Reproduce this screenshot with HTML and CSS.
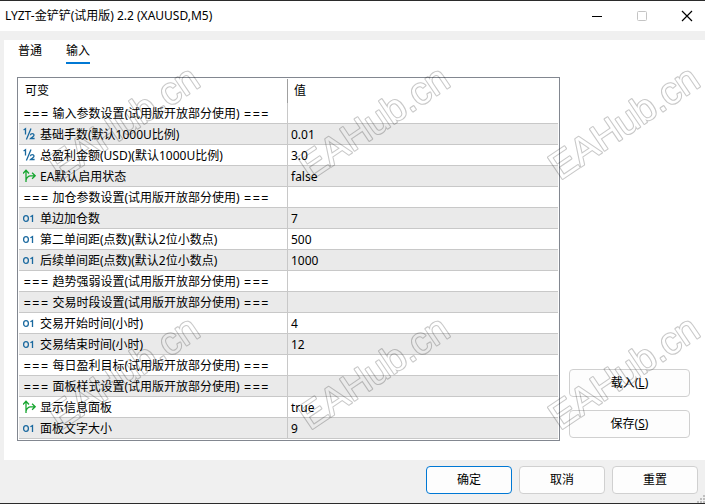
FILE: index.html
```
<!DOCTYPE html>
<html lang="zh-CN">
<head>
    <meta charset="UTF-8">
    <meta name="viewport" content="width=device-width, initial-scale=1.0">
    <title>LYZT-金铲铲(试用版) 2.2 (XAUUSD,M5)</title>
    <link rel="stylesheet" href="styles.css">
</head>
<body>
    <!-- Shared icons -->
    <svg class="sprite" aria-hidden="true">
        <symbol id="icon-double" viewBox="0 0 14 14">
            <path d="M0.6 3 L2.5 1.8 V7.6 M8 1.6 L3.4 12.4 M7.4 8.2 C7.6 6.2 11 6.2 11 8.2 C11 9.4 8.8 10.2 7.6 11.5 H11.6" fill="none" stroke="#1a699f" stroke-width="1.3"/>
        </symbol>
        <symbol id="icon-int" viewBox="0 0 14 14">
            <ellipse cx="3" cy="7.5" rx="2.4" ry="2.9" fill="none" stroke="#1a699f" stroke-width="1.3"/>
            <path d="M7.4 5.8 L9.5 4.6 V11" fill="none" stroke="#1a699f" stroke-width="1.3"/>
        </symbol>
        <symbol id="icon-bool" viewBox="0 0 14 14">
            <path d="M3 13 V1.5 M0 4.5 L3 1.3 L6 4.5 M3 11 C4 8 5.5 6.8 7.5 6.8 H12 M9.1 3.8 L12.2 6.8 L9.1 9.8" fill="none" stroke="#16a52f" stroke-width="1.3"/>
        </symbol>
    </svg>

    <!-- Title Bar -->
    <header class="titlebar">
        <h1>LYZT-金铲铲(试用版) 2.2 (XAUUSD,M5)</h1>
        <div class="window-controls">
            <button type="button" aria-label="最小化"><svg width="12" height="12"><path d="M1 6.5 H11" stroke="#000"/></svg></button>
            <button type="button" aria-label="最大化" disabled><svg width="12" height="12"><rect x="1.5" y="1.5" width="9" height="9" rx="1" fill="none" stroke="#c4c4c4"/></svg></button>
            <button type="button" aria-label="关闭"><svg width="12" height="12"><path d="M1 1 L11 11 M11 1 L1 11" stroke="#000" stroke-width="1.2"/></svg></button>
        </div>
    </header>

    <!-- Inputs Panel -->
    <main class="panel">
        <nav class="tabs">
            <button type="button" class="tab">普通</button>
            <button type="button" class="tab active">输入</button>
        </nav>
        <div class="content">
            <div class="grid">
                <table>
                    <thead>
                        <tr><th class="name">可变</th><th>值</th></tr>
                    </thead>
                    <tbody>
                        <tr><td><span class="marks">=== </span>输入参数设置(试用版开放部分使用)<span class="marks"> ===</span></td><td></td></tr>
                        <tr><td><svg class="icon"><use href="#icon-double"/></svg>基础手数(默认1000U比例)</td><td>0.01</td></tr>
                        <tr><td><svg class="icon"><use href="#icon-double"/></svg>总盈利金额(USD)(默认1000U比例)</td><td>3.0</td></tr>
                        <tr><td><svg class="icon"><use href="#icon-bool"/></svg>EA默认启用状态</td><td>false</td></tr>
                        <tr><td><span class="marks">=== </span>加仓参数设置(试用版开放部分使用)<span class="marks"> ===</span></td><td></td></tr>
                        <tr><td><svg class="icon"><use href="#icon-int"/></svg>单边加仓数</td><td>7</td></tr>
                        <tr><td><svg class="icon"><use href="#icon-int"/></svg>第二单间距(点数)(默认2位小数点)</td><td>500</td></tr>
                        <tr><td><svg class="icon"><use href="#icon-int"/></svg>后续单间距(点数)(默认2位小数点)</td><td>1000</td></tr>
                        <tr><td><span class="marks">=== </span>趋势强弱设置(试用版开放部分使用)<span class="marks"> ===</span></td><td></td></tr>
                        <tr><td><span class="marks">=== </span>交易时段设置(试用版开放部分使用)<span class="marks"> ===</span></td><td></td></tr>
                        <tr><td><svg class="icon"><use href="#icon-int"/></svg>交易开始时间(小时)</td><td>4</td></tr>
                        <tr><td><svg class="icon"><use href="#icon-int"/></svg>交易结束时间(小时)</td><td>12</td></tr>
                        <tr><td><span class="marks">=== </span>每日盈利目标(试用版开放部分使用)<span class="marks"> ===</span></td><td></td></tr>
                        <tr><td><span class="marks">=== </span>面板样式设置(试用版开放部分使用)<span class="marks"> ===</span></td><td></td></tr>
                        <tr><td><svg class="icon"><use href="#icon-bool"/></svg>显示信息面板</td><td>true</td></tr>
                        <tr><td><svg class="icon"><use href="#icon-int"/></svg>面板文字大小</td><td>9</td></tr>
                    </tbody>
                </table>
            </div>
            <div class="side">
                <button type="button" class="btn" accesskey="l">载入(<u>L</u>)</button>
                <button type="button" class="btn" accesskey="s">保存(<u>S</u>)</button>
            </div>
        </div>
    </main>

    <!-- Footer Section -->
    <footer class="footer">
        <button type="button" class="btn primary">确定</button>
        <button type="button" class="btn">取消</button>
        <button type="button" class="btn">重置</button>
        <svg class="grip" width="8" height="8" aria-hidden="true"><path d="M6 0h2v2h-2z M3 3h2v2h-2z M6 3h2v2h-2z M0 6h2v2h-2z M3 6h2v2h-2z M6 6h2v2h-2z" fill="#bfbfbf"/></svg>
    </footer>

    <!-- Watermark, repeats every 250px -->
    <svg class="watermark" aria-hidden="true">
        <defs>
            <mask id="outline" maskUnits="userSpaceOnUse" x="0" y="0" width="250" height="250">
                <text class="mark-outer" transform="translate(131 133) rotate(-34)">EAHub.cn</text>
                <text class="mark-inner" transform="translate(131 133) rotate(-34)">EAHub.cn</text>
            </mask>
            <pattern id="mark" width="250" height="250" patternUnits="userSpaceOnUse">
                <rect width="250" height="250" fill="#000" fill-opacity="0.22" mask="url(#outline)"/>
            </pattern>
        </defs>
        <rect width="100%" height="100%" fill="url(#mark)"/>
    </svg>
</body>
</html>
```
FILE: styles.css
```
/* General Styling */
* {
    margin: 0;
    padding: 0;
    box-sizing: border-box;
}

body {
    position: relative;
    display: flex;
    flex-direction: column;
    min-height: 100vh;
    font-family: "Noto Sans", "Noto Sans CJK SC", sans-serif;
    font-size: 12px;
    line-height: 20px;
    color: #000;
    background: #f0f0f0;
    border-top: 1px solid #2b2b2b;
    border-bottom: 1px solid #2b2b2b;
}

button {
    font: inherit;
    color: inherit;
    background: none;
    border: none;
}

.sprite {
    display: none;
}

/* Title Bar */
.titlebar {
    display: flex;
    justify-content: space-between;
    align-items: center;
    height: 30px;
    padding-left: 5px;
    background: #fff;
}

.titlebar h1 {
    font-size: 12px;
    font-weight: normal;
}

.window-controls {
    display: flex;
    gap: 9px;
}

.window-controls button {
    display: flex;
    justify-content: center;
    align-items: center;
    width: 36px;
    height: 28px;
}

/* Panel */
.panel {
    flex: 1;
    margin: 9px 0 0 4px;
    padding: 0 15px 19px 13px;
    background: #fff;
}

.tabs {
    display: flex;
    gap: 24px;
    padding-left: 1px;
    margin-bottom: 13px;
}

.tab {
    height: 24px;
    line-height: 22px;
    border-bottom: 2px solid transparent;
}

.tab.active {
    border-bottom-color: #0078d4;
}

.content {
    display: flex;
    gap: 9px;
}

/* Parameter Table */
.grid {
    flex: 1;
    padding: 1px;
    border: 1px solid #828790;
}

table {
    width: 100%;
    table-layout: fixed;
    border-collapse: separate;
    border-spacing: 0;
}

th {
    height: 24px;
    padding-left: 6px;
    font-weight: normal;
    text-align: left;
}

th.name {
    width: 269px;
    border-right: 1px solid #a0a0a0;
}

td {
    height: 21px;
    padding: 2px 0 0 4px;
    line-height: 18px;
    white-space: nowrap;
    border-bottom: 1px solid #c8c8c8;
}

td:first-child {
    border-right: 1px solid #c8c8c8;
}

td + td {
    padding-left: 3px;
}

tbody tr:nth-child(even) {
    background: #eaeaea;
}

.icon {
    width: 14px;
    height: 14px;
    margin-right: 3px;
    vertical-align: -2px;
}

.marks {
    font-family: Inter, sans-serif;
    font-size: 13px;
    line-height: 16px;
    white-space: pre;
}

/* Buttons */
.side {
    display: flex;
    flex-direction: column;
    justify-content: flex-end;
    gap: 13px;
    width: 121px;
    padding-bottom: 3px;
}

.btn {
    height: 28px;
    background: #fdfdfd;
    border: 1px solid #d0d0d0;
    border-radius: 4px;
}

.btn.primary {
    border-color: #0078d4;
}

.footer {
    position: relative;
    display: flex;
    justify-content: flex-end;
    gap: 7px;
    padding: 6px 7px 9px;
}

.footer .btn {
    width: 86px;
}

.grip {
    position: absolute;
    right: 0;
    bottom: 0;
}

/* Watermark */
.watermark {
    position: absolute;
    top: -1px;
    left: 0;
    width: 100%;
    height: 100%;
    pointer-events: none;
}

.mark-outer,
.mark-inner {
    font-family: "Liberation Sans", sans-serif;
    font-size: 38px;
    text-anchor: middle;
    stroke-linejoin: round;
}

.mark-outer {
    fill: #fff;
    stroke: #fff;
    stroke-width: 2px;
}

.mark-inner {
    fill: #000;
}
```
